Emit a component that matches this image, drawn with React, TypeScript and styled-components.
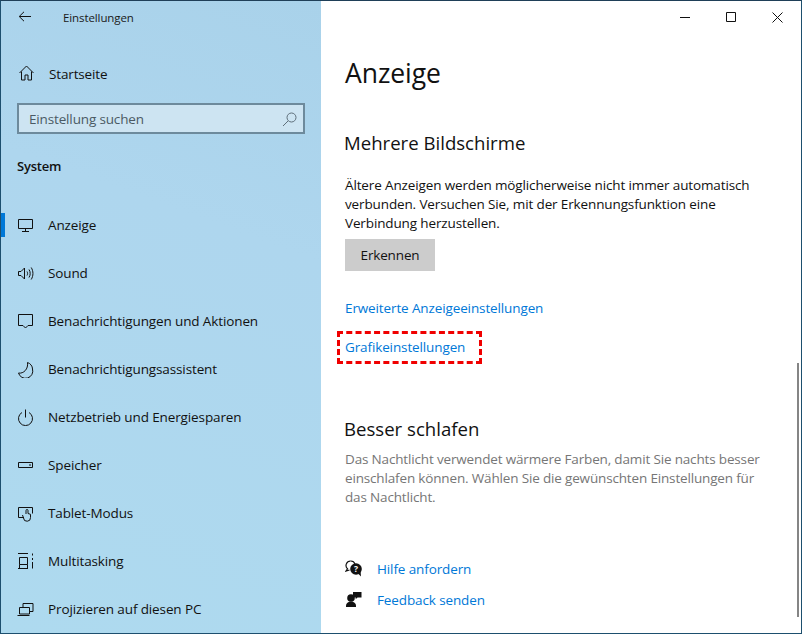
import React from 'react';
import styled, { createGlobalStyle } from 'styled-components';

const Global = createGlobalStyle`
  html, body {
    margin: 0;
    padding: 0;
    background: #fff;
    font-family: "Open Sans", "Noto Sans", sans-serif;
  }
`;

const Frame = styled.div`
  position: relative;
  box-sizing: border-box;
  width: 802px;
  height: 634px;
  border: 1px solid #1d4f6e;
  border-top-color: #1f3f58;
  display: flex;
  overflow: hidden;
  color: #000;
`;

const Sidebar = styled.aside`
  width: 320px;
  flex: none;
  background: linear-gradient(200deg, #a9d2ea 0%, #aed6ee 35%, #aedaef 100%);
  display: flex;
  flex-direction: column;
`;

const TitleBar = styled.div`
  height: 34px;
  display: flex;
  align-items: center;
  padding-left: 17px;
  gap: 30px;
  font-size: 11.5px;
  letter-spacing: -0.1px;
  color: #1a1a1a;
`;

const HomeRow = styled.div`
  margin-top: 15px;
  height: 48px;
  padding: 4px 0 0 18px;
  box-sizing: border-box;
  display: flex;
  align-items: center;
  gap: 13px;
  font-size: 13.5px;
  letter-spacing: -0.15px;
  color: #111;
`;

const SearchBox = styled.div`
  box-sizing: border-box;
  margin: 8px 0 0 16px;
  width: 288px;
  height: 32px;
  border: 2px solid #6d8a9c;
  background: #cde4f2;
  display: flex;
  align-items: center;
  justify-content: space-between;
  padding: 1px 6px 0 10px;
  font-size: 13.5px;
  letter-spacing: -0.15px;
  color: #4b5a64;
`;

const SectionLabel = styled.div`
  margin: 20px 0 0 16px;
  height: 24px;
  line-height: 24px;
  font-size: 13px;
  font-weight: 600;
  letter-spacing: -0.2px;
  color: #111;
`;

const Nav = styled.nav`
  margin-top: 23px;
  display: flex;
  flex-direction: column;
`;

const NavItem = styled.div<{ $active?: boolean }>`
  position: relative;
  height: 48px;
  display: flex;
  align-items: center;
  gap: 14px;
  padding-left: 16px;
  font-size: 13.5px;
  letter-spacing: -0.12px;
  color: #111;
  white-space: nowrap;
  &::before {
    content: '';
    display: ${(p) => (p.$active ? 'block' : 'none')};
    position: absolute;
    left: 0;
    top: 12px;
    width: 4px;
    height: 24px;
    background: #0078d7;
  }
`;

const Main = styled.main`
  flex: 1;
  min-width: 0;
  display: flex;
  flex-direction: column;
  padding-left: 24px;
  background: #fff;
`;

const WindowControls = styled.div`
  position: absolute;
  top: 0;
  right: 1px;
  display: flex;
`;

const WindowButton = styled.div`
  width: 46px;
  height: 33px;
  display: flex;
  align-items: center;
  justify-content: center;
`;

const PageTitle = styled.h1`
  margin: 52px 0 0;
  height: 40px;
  line-height: 40px;
  font-size: 26.5px;
  font-weight: 400;
  letter-spacing: -0.05px;
  color: #111;
`;

const SectionTitle = styled.h2<{ $top: number }>`
  margin: ${(p) => p.$top}px 0 0 -1px;
  height: 28px;
  line-height: 28px;
  font-size: 18.6px;
  font-weight: 400;
  color: #111;
`;

const Paragraph = styled.p<{ $muted?: boolean; $top: number }>`
  margin: ${(p) => p.$top}px 0 0;
  width: 420px;
  font-size: 13.5px;
  line-height: 19px;
  letter-spacing: ${(p) => (p.$muted ? '-0.16px' : '-0.13px')};
  color: ${(p) => (p.$muted ? '#767676' : '#111')};
`;

const DetectButton = styled.div`
  margin-top: 6px;
  width: 90px;
  height: 32px;
  display: flex;
  align-items: center;
  justify-content: center;
  background: #cccccc;
  font-size: 13.5px;
  letter-spacing: -0.15px;
  color: #111;
`;

const LinkText = styled.a<{ $top?: number }>`
  display: block;
  margin-top: ${(p) => p.$top ?? 0}px;
  font-size: 13.5px;
  line-height: 20px;
  letter-spacing: -0.12px;
  color: #0078d7;
  white-space: nowrap;
`;

const Highlight = styled.div`
  position: absolute;
  left: 336px;
  top: 330px;
  width: 145px;
  height: 33px;
  box-sizing: border-box;
  border: 3px dashed #f00000;
`;

const HelpList = styled.div`
  margin-top: 46px;
  display: flex;
  flex-direction: column;
`;

const HelpRow = styled.div`
  display: flex;
  align-items: center;
  gap: 15px;
  height: 31px;
`;

const ScrollThumb = styled.div`
  position: absolute;
  right: 2px;
  top: 362px;
  width: 2px;
  height: 254px;
  background: #858585;
`;

const IconSvg = styled.svg`
  flex: none;
  width: 17px;
  height: 17px;
  fill: none;
  stroke: #111;
  stroke-width: 1;
`;

const Icon = ({ children }: { children: React.ReactNode }) => <IconSvg viewBox="0 0 17 17">{children}</IconSvg>;

const items: { label: string; icon: React.ReactNode; active?: boolean }[] = [
  {
    label: 'Anzeige',
    active: true,
    icon: <path d="M1.500 2.500h14v9h-14zM8.500 11.500v3M5 14.500h7" />,
  },
  {
    label: 'Sound',
    icon: (
      <path d="M1.500 6.500h2.500l3.500-3.500v11l-3.500-3.500h-2.500zM10 6.500c.8 1.200.8 2.800 0 4M12 4.500c1.600 2.400 1.600 5.600 0 8M14.200 2.500c2.300 3.600 2.300 8.400 0 12" />
    ),
  },
  {
    label: 'Benachrichtigungen und Aktionen',
    icon: <path d="M1.500 1.500h14v11h-4.500l-2.500 2.500-2.500-2.500h-4.500z" />,
  },
  {
    label: 'Benachrichtigungsassistent',
    icon: <path d="M10.500 1.500c3 1 5 3.600 5 6.500a7 7 0 0 1-14 4c5 1 10-4 9-10.500z" />,
  },
  {
    label: 'Netzbetrieb und Energiesparen',
    icon: <path d="M5 3.500a7 7 0 1 0 7 0M8.500 0.500v8" />,
  },
  {
    label: 'Speicher',
    icon: <path d="M1.500 5.500h14v5h-14zM12 8h2" />,
  },
  {
    label: 'Tablet-Modus',
    icon: (
      <path d="M7 12.500h-5.500v-10h14v6M9 9v-3.500a1 1 0 0 1 2 0v3l2.500 .8v3.200a3.500 3.500 0 0 1-7 .5l-1-3" />
    ),
  },
  {
    label: 'Multitasking',
    icon: <path d="M1 .5h10M2.500 4.500h8v7h-8zM1 15.500h10M2.500 11.500v4M10.500 11.500v4M15.500 .5v2M15.500 5v2M15.500 9v6.500" />,
  },
  {
    label: 'Projizieren auf diesen PC',
    icon: <path d="M6 6v-3.500h10v8h-3.500M2.500 6.500h10v6.500h-10zM.5 14.500h12" />,
  },
];

export default function App() {
  return (
    <>
      <Global />
      <Frame>
        <Sidebar>
          <TitleBar>
            <svg width="15" height="12" viewBox="0 0 15 12" fill="none" stroke="#111" strokeWidth="1">
              <path d="M13 5.500H1.500M6 .8 1.200 5.500 6 10.200" />
            </svg>
            <span>Einstellungen</span>
          </TitleBar>
          <HomeRow>
            <Icon>
              <path d="M.5 8 7.500 1 14.500 8M2.500 6.500v8.500h3.500v-5h3v5h3.500V6.500" />
            </Icon>
            Startseite
          </HomeRow>
          <SearchBox>
            Einstellung suchen
            <svg width="15" height="15" viewBox="0 0 15 15" fill="none" stroke="#5f6f7a" strokeWidth="1">
              <circle cx="9.500" cy="5.500" r="4.500" />
              <path d="M6 9 1 14" />
            </svg>
          </SearchBox>
          <SectionLabel>System</SectionLabel>
          <Nav>
            {items.map((item) => (
              <NavItem key={item.label} $active={item.active}>
                <Icon>{item.icon}</Icon>
                {item.label}
              </NavItem>
            ))}
          </Nav>
        </Sidebar>
        <Main>
          <PageTitle>Anzeige</PageTitle>
          <SectionTitle $top={36}>Mehrere Bildschirme</SectionTitle>
          <Paragraph $top={19}>
            Ältere Anzeigen werden möglicherweise nicht immer automatisch verbunden. Versuchen Sie, mit der
            Erkennungsfunktion eine Verbindung herzustellen.
          </Paragraph>
          <DetectButton>Erkennen</DetectButton>
          <LinkText $top={27}>Erweiterte Anzeigeeinstellungen</LinkText>
          <LinkText $top={19}>Grafikeinstellungen</LinkText>
          <SectionTitle $top={58}>Besser schlafen</SectionTitle>
          <Paragraph $muted $top={7}>
            Das Nachtlicht verwendet wärmere Farben, damit Sie nachts besser einschlafen können. Wählen Sie die
            gewünschten Einstellungen für das Nachtlicht.
          </Paragraph>
          <HelpList>
            <HelpRow>
              <svg width="17" height="17" viewBox="0 0 17 17">
                <path
                  d="M5.500 1a4.500 4.500 0 0 0-3 7.800l-1.500 2.200 3.500-1"
                  fill="#fff"
                  stroke="#111"
                  strokeWidth="1.200"
                />
                <path d="M5.500 1a4.500 4.500 0 0 1 4.500 3" fill="none" stroke="#111" strokeWidth="1.200" />
                <circle cx="11" cy="9" r="5.800" fill="#111" />
                <path d="M13 13.500 16 16.500 15.500 11z" fill="#111" />
                <text x="11" y="12" fontSize="8.500" fontWeight="700" fill="#fff" textAnchor="middle">
                  ?
                </text>
              </svg>
              <LinkText>Hilfe anfordern</LinkText>
            </HelpRow>
            <HelpRow>
              <svg width="17" height="17" viewBox="0 0 17 17" fill="#111">
                <circle cx="6" cy="7" r="3.800" />
                <path d="M1 16v-1.500a5 4 0 0 1 10 0v1.500z" />
                <path d="M8 1h8.500v5.500h-4l-1.800 1.800v-1.800h-2.700z" />
              </svg>
              <LinkText>Feedback senden</LinkText>
            </HelpRow>
          </HelpList>
        </Main>
        <Highlight />
        <WindowControls>
          <WindowButton>
            <svg width="11" height="11" viewBox="0 0 11 11" stroke="#111">
              <path d="M0 5.500h10" />
            </svg>
          </WindowButton>
          <WindowButton>
            <svg width="11" height="11" viewBox="0 0 11 11" fill="none" stroke="#111">
              <path d="M.5.500h9v9h-9z" />
            </svg>
          </WindowButton>
          <WindowButton>
            <svg width="11" height="11" viewBox="0 0 11 11" stroke="#111">
              <path d="M.5.500l10 10M10.500.500l-10 10" />
            </svg>
          </WindowButton>
        </WindowControls>
        <ScrollThumb />
      </Frame>
    </>
  );
}
